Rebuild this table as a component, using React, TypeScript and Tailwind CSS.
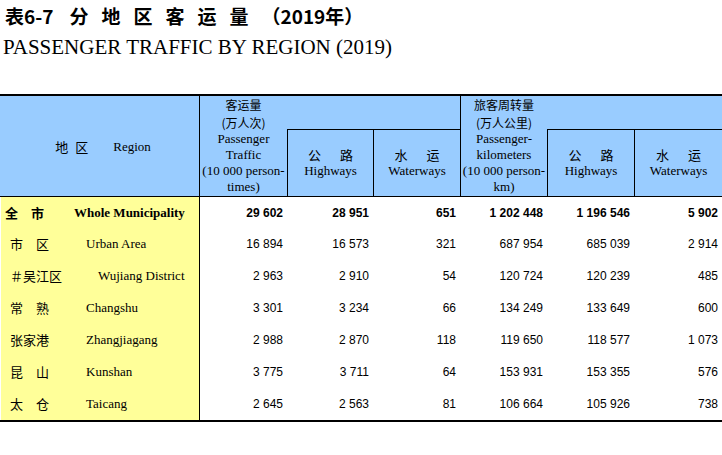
import React from "react";

const GRID = "grid grid-cols-[199px_88px_86px_87px_87px_87px_88px]";
const CJK = "font-['Noto_Sans_CJK_SC',sans-serif]";
const SERIF = "font-['Liberation_Serif','Noto_Sans_CJK_SC',serif]";
const SANS = "font-['Liberation_Sans',Arial,sans-serif]";

type Row = {
  zh: string;
  en: string;
  vals: string[];
  bold?: boolean;
  indent?: boolean;
};

const rows: Row[] = [
  { zh: "全　市", en: "Whole Municipality", vals: ["29 602", "28 951", "651", "1 202 448", "1 196 546", "5 902"], bold: true },
  { zh: "市　区", en: "Urban Area", vals: ["16 894", "16 573", "321", "687 954", "685 039", "2 914"] },
  { zh: "＃吴江区", en: "Wujiang District", vals: ["2 963", "2 910", "54", "120 724", "120 239", "485"], indent: true },
  { zh: "常　熟", en: "Changshu", vals: ["3 301", "3 234", "66", "134 249", "133 649", "600"] },
  { zh: "张家港", en: "Zhangjiagang", vals: ["2 988", "2 870", "118", "119 650", "118 577", "1 073"] },
  { zh: "昆　山", en: "Kunshan", vals: ["3 775", "3 711", "64", "153 931", "153 355", "576"] },
  { zh: "太　仓", en: "Taicang", vals: ["2 645", "2 563", "81", "106 664", "105 926", "738"] },
];

function SubHead({ zh1, zh2, en, pos }: { zh1: string; zh2: string; en: string; pos: string }) {
  return (
    <div className={`${pos} row-start-2 border-l border-t border-black flex flex-col items-center justify-center text-[13px] leading-[16px] text-black`}>
      <div className={`flex gap-[19px] ${CJK}`}>
        <span>{zh1}</span>
        <span>{zh2}</span>
      </div>
      <div className={SERIF}>{en}</div>
    </div>
  );
}

function BigHead({ zh1, zh2, en, pos }: { zh1: string; zh2: string; en: string[]; pos: string }) {
  return (
    <div className={`${pos} row-start-1 row-span-2 border-l border-black flex flex-col items-center text-center text-[13px] text-black`}>
      <div className={`leading-[17.5px] text-[12px] ${CJK}`}>
        <div>{zh1}</div>
        <div>{zh2}</div>
      </div>
      <div className={`leading-[16px] ${SERIF}`}>
        {en.map((l) => (
          <div key={l}>{l}</div>
        ))}
      </div>
    </div>
  );
}

export default function App() {
  return (
    <div className="w-[722px] h-[455px] bg-white overflow-hidden text-black">
      <div className={`pl-[5px] pt-[5px] h-[22px] leading-[22px] text-[19px] font-bold whitespace-nowrap flex ${CJK}`}>
        <span>表6-7</span>
        <span className="ml-[16px] tracking-[13px]">分地区客运量</span>
        <span>（2019年）</span>
      </div>
      <div className={`pl-[3px] mt-[13px] text-[21px] leading-[24px] whitespace-nowrap ${SERIF}`}>
        PASSENGER TRAFFIC BY REGION (2019)
      </div>

      <div className="mt-[35px] border-t-2 border-b-2 border-black">
        {/* header */}
        <div className={`${GRID} grid-rows-[33px_67px] bg-[#99ccff] border-b border-black`}>
          <div className="col-start-1 row-start-1 row-span-2 ml-[1px] flex items-center justify-center text-[13px] pt-[2px]">
            <span className={`flex gap-[7px] mr-[25px] ml-[6px] ${CJK}`}>
              <span>地</span>
              <span>区</span>
            </span>
            <span className={SERIF}>Region</span>
          </div>
          <BigHead
            pos="col-start-2"
            zh1="客运量"
            zh2="(万人次)"
            en={["Passenger", "Traffic", "(10 000 person-", "times)"]}
          />
          <SubHead pos="col-start-3" zh1="公" zh2="路" en="Highways" />
          <SubHead pos="col-start-4" zh1="水" zh2="运" en="Waterways" />
          <BigHead
            pos="col-start-5"
            zh1="旅客周转量"
            zh2="(万人公里)"
            en={["Passenger-", "kilometers", "(10 000 person-", "km)"]}
          />
          <SubHead pos="col-start-6" zh1="公" zh2="路" en="Highways" />
          <SubHead pos="col-start-7" zh1="水" zh2="运" en="Waterways" />
        </div>

        {/* body */}
        {rows.map((r, i) => (
          <div key={r.zh} className={`${GRID} ${i === 0 ? "h-[31px]" : "h-[32px]"}`}>
            <div
              className={`ml-[1px] bg-[#ffff99] flex items-center text-[13px] ${r.bold ? "font-bold pl-[4px]" : "pl-[9px]"}`}
            >
              <span className={`${r.bold ? "w-[69px]" : "w-[76px]"} ${CJK}`}>{r.zh}</span>
              <span className={`${r.indent ? "ml-[12px]" : ""} ${SERIF}`}>{r.en}</span>
            </div>
            {r.vals.map((v, j) => (
              <div
                key={j}
                className={`flex items-center justify-end pr-[4px] text-[12px] ${SANS} ${j === 0 ? "border-l border-black" : ""} ${r.bold ? "font-bold" : ""}`}
              >
                {v}
              </div>
            ))}
          </div>
        ))}
      </div>
    </div>
  );
}
